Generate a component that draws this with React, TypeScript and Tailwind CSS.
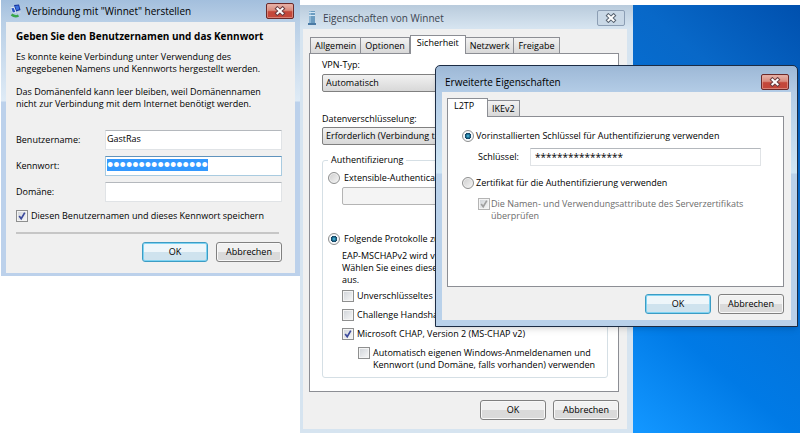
import clsx from "clsx";

const openSans = "font-['Open_Sans','Noto_Sans',sans-serif]";

function CloseButton({ inactive = false }: { inactive?: boolean }) {
  return (
    <button
      aria-label="Schließen"
      className={clsx(
        "flex h-4 w-7 shrink-0 items-center justify-center rounded-[2px] border",
        inactive
          ? "border-[#8c9eb4] bg-[#c9d8e6]"
          : "border-[#6b2a2a] bg-linear-to-b from-[#e3aca2] from-10% via-[#d98a7c] via-45% to-[#c4473a] to-55% ring-1 ring-inset ring-[#e8a89c]/60"
      )}
    >
      <svg viewBox="0 0 12 10" className="h-[10px] w-3">
        <path d="M3.4 2.6 L8.6 7.4 M8.6 2.6 L3.4 7.4" stroke={inactive ? "#55606e" : "#6a3c40"} strokeWidth="4" strokeLinecap="square" />
        <path d="M3.4 2.6 L8.6 7.4 M8.6 2.6 L3.4 7.4" stroke="#fff" strokeWidth="2" strokeLinecap="square" />
      </svg>
    </button>
  );
}

function Button({ children, primary = false }: { children: string; primary?: boolean }) {
  return (
    <button
      className={clsx(
        "h-5 w-[66px] rounded-[3px] border text-center text-black",
        primary
          ? "border-[#3c9cc4] bg-linear-to-b from-[#eef6fa] from-50% to-[#cfe3ee] to-50% ring-1 ring-inset ring-[#7fd3f2]"
          : "border-[#808080] bg-linear-to-b from-[#f1f1f1] from-50% to-[#dadada] to-50% ring-1 ring-inset ring-[#f8f8f8]"
      )}
    >
      {children}
    </button>
  );
}

function Checkbox({ id, checked = false, disabled = false }: { id: string; checked?: boolean; disabled?: boolean }) {
  return (
    <span className="grid h-3 w-3 shrink-0">
      <input
        id={id}
        type="checkbox"
        defaultChecked={checked}
        disabled={disabled}
        className="col-start-1 row-start-1 h-3 w-3 appearance-none border border-[#8e8f8f] bg-linear-to-br from-[#cfd3d8] to-[#f8f8f8] ring-1 ring-inset ring-[#f4f4f4] disabled:border-[#b4b4b4]"
      />
      {checked && (
        <svg viewBox="0 0 12 12" className="pointer-events-none col-start-1 row-start-1 h-3 w-3">
          <path d="M3.2 6 L5.2 8.8 L8.8 2.6" fill="none" stroke={disabled ? "#a0a0a0" : "#3c4a9c"} strokeWidth="1.7" />
        </svg>
      )}
    </span>
  );
}

function Radio({ id, name, checked = false }: { id: string; name: string; checked?: boolean }) {
  return (
    <input
      id={id}
      name={name}
      type="radio"
      defaultChecked={checked}
      className={clsx(
        "h-3 w-3 shrink-0 appearance-none rounded-full border border-[#8e8f8f]",
        checked
          ? "bg-[radial-gradient(circle_at_center,#7fdcf4_0,#2a8fb5_1px,#123e5c_3px,#f4f6f8_3px)]"
          : "bg-linear-to-br from-[#cdcdcd] to-[#f6f6f6] ring-1 ring-inset ring-[#f0f0f0]"
      )}
    />
  );
}

function Tab({ children, active = false }: { children: string; active?: boolean }) {
  return (
    <button
      role="tab"
      aria-selected={active}
      className={clsx(
        "border border-b-0 border-[#8c8e94] text-left",
        active ? "-mb-px h-[19px] min-w-[41px] bg-white px-[6px] pb-1" : "h-4 border-l-0 bg-linear-to-b from-[#f2f2f2] to-[#d8d8d8] px-1 first:border-l"
      )}
    >
      {children}
    </button>
  );
}

function ConnectDialog() {
  const field = "h-5 w-full border border-[#e0e3e6] border-t-[#b4b8bd] bg-white";
  return (
    <section className="absolute top-0 left-px w-[299px] bg-[linear-gradient(#a3bfdd,#b9cfe6_22px,#dfebf6_101px,#bcd1eb_102px)] px-[5px] pb-[3px]">
      <header className="flex h-[22px] items-center pr-px pl-1">
        <svg viewBox="0 0 12 14" className="h-[14px] w-3">
          <path d="M4 1 L9 0.5 L10.5 6 L6 7.5 Z" fill="#16309c" />
          <path d="M5 2 L8.4 1.6 L9.3 5.3 L6.5 6.2 Z" fill="#3d72dc" />
          <path d="M0.5 3.5 L4 3 L6.5 8.5 L2.5 9.5 Z" fill="#e4e9f4" />
          <path d="M1.4 4.3 L3.7 4 L5.4 8 L2.8 8.6 Z" fill="#2c55c0" />
          <path d="M7 8 L10 7 L11 9 L8 10 Z" fill="#c8d2e2" />
          <path d="M1.5 10.5 Q5 13.5 8.5 11.5" fill="none" stroke="#3aa64a" strokeWidth="2.4" />
        </svg>
        <h1 className="ml-1 grow text-[10px] whitespace-nowrap">Verbindung mit "Winnet" herstellen</h1>
        <CloseButton />
      </header>
      <form className="bg-[#f0f0f0] px-[10px] pt-2 pb-[11px]">
        <h2 className="text-[10px] leading-3 font-bold whitespace-nowrap">Geben Sie den Benutzernamen und das Kennwort</h2>
        <p className="mt-[9px]">
          Es konnte keine Verbindung unter Verwendung des
          <br />
          angegebenen Namens und Kennworts hergestellt werden.
        </p>
        <p className="mt-[11px]">
          Das Domänenfeld kann leer bleiben, weil Domänennamen
          <br />
          nicht zur Verbindung mit dem Internet benötigt werden.
        </p>
        <div className="mt-5 mr-[3px] grid grid-cols-[89px_1fr] items-center gap-y-[6px]">
          <label htmlFor="user">Benutzername:</label>
          <input id="user" defaultValue="GastRas" className={clsx(field, "px-px pb-[3px]")} />
          <label htmlFor="pass">Kennwort:</label>
          <div className="flex h-5 items-start border border-[#a9cbe0] border-t-[#5f93bd] bg-white px-px pt-[2px]">
            <input
              id="pass"
              type="password"
              defaultValue="passwort12345678"
              className="field-sizing-content h-3 bg-[#3399ff] font-['Liberation_Sans',sans-serif] text-[18px] leading-3 text-white"
            />
          </div>
          <label htmlFor="domain">Domäne:</label>
          <input id="domain" className={field} />
        </div>
        <div className="mt-2 flex items-center gap-[3px]">
          <Checkbox id="save" checked />
          <label htmlFor="save">Diesen Benutzernamen und dieses Kennwort speichern</label>
        </div>
        <hr className="mt-[10px] mr-[6px] border-t-2 border-[#c6c6c6]" />
        <div className="mt-2 mr-[3px] flex justify-end gap-2">
          <Button primary>OK</Button>
          <Button>Abbrechen</Button>
        </div>
      </form>
    </section>
  );
}

function PropertiesDialog() {
  const select =
    "block h-[18px] w-full appearance-none rounded-[2px] border border-[#808080] bg-linear-to-b from-[#f1f1f1] to-[#d8d8d8] px-[3px]";
  return (
    <section className="absolute top-0 left-0 w-[333px] border-b border-[#3c6c94] bg-linear-to-b from-[#b9cbdc] to-[#d6e4f0] to-[23px] pr-[6px] pb-[5px] pl-[3px]">
      <header className="flex h-6 items-center pt-[2px] pr-[2px] pl-[5px]">
        <svg viewBox="0 0 8 14" className="h-[14px] w-2">
          <rect x="1" width="6" height="14" fill="#6c9cc0" />
          <rect x="1" width="2" height="14" fill="#8fb8d6" />
          <rect x="1" y="1" width="6" height="1" fill="#d3e6f4" />
          <rect x="1" y="4" width="6" height="1" fill="#d3e6f4" />
          <rect x="0" y="12" width="8" height="2" fill="#4a7aa4" />
        </svg>
        <h1 className="ml-[7px] grow text-[10px] text-[#3c4450]">Eigenschaften von Winnet</h1>
        <CloseButton inactive />
      </header>
      <form className="bg-[#f0f0f0] pt-[6px] pr-2 pb-[9px] pl-[6px]">
        <div role="tablist" className="flex items-end pl-px">
          <Tab>Allgemein</Tab>
          <Tab>Optionen</Tab>
          <Tab active>Sicherheit</Tab>
          <Tab>Netzwerk</Tab>
          <Tab>Freigabe</Tab>
        </div>
        <div className="border border-[#8c8e94] bg-white pt-[5px] pr-[10px] pb-[13px] pl-3">
          <label htmlFor="vpn">VPN-Typ:</label>
          <select id="vpn" className={clsx(select, "mt-[3px]")}>
            <option>Automatisch</option>
          </select>
          <label htmlFor="enc" className="mt-[21px] block">
            Datenverschlüsselung:
          </label>
          <select id="enc" className={clsx(select, "mt-[2px]")}>
            <option>Erforderlich (Verbindung trennen, falls Server ablehnt)</option>
          </select>
          <fieldset className="mt-[9px] rounded-[3px] border border-[#d5dfe5] px-[5px] pb-[6px]">
            <legend className="px-[3px]">Authentifizierung</legend>
            <div className="mt-[6px] flex items-center gap-1">
              <Radio id="eap" name="auth" />
              <label htmlFor="eap">Extensible-Authentication</label>
            </div>
            <select disabled aria-label="EAP" className="mt-[3px] ml-[14px] block h-[18px] w-[240px] appearance-none rounded-[2px] border border-[#b4b4b4] bg-[#f4f4f4]" />
            <div className="mt-[28px] flex items-center gap-1">
              <Radio id="protocols" name="auth" checked />
              <label htmlFor="protocols">Folgende Protokolle zulassen</label>
            </div>
            <p className="mt-[5px] ml-[14px]">
              EAP-MSCHAPv2 wird verwendet.
              <br />
              Wählen Sie eines dieser Protokolle
              <br />
              aus.
            </p>
            <div className="mt-1 ml-[14px] flex flex-col gap-[7px]">
              <div className="flex items-center gap-[3px]">
                <Checkbox id="pap" />
                <label htmlFor="pap">Unverschlüsseltes Kennwort (PAP)</label>
              </div>
              <div className="flex items-center gap-[3px]">
                <Checkbox id="chap" />
                <label htmlFor="chap">Challenge Handshake (CHAP)</label>
              </div>
              <div className="flex items-center gap-[3px]">
                <Checkbox id="mschap" checked />
                <label htmlFor="mschap">Microsoft CHAP, Version 2 (MS-CHAP v2)</label>
              </div>
              <div className="ml-4 flex items-start gap-[3px]">
                <Checkbox id="auto" />
                <label htmlFor="auto" className="whitespace-nowrap">
                  Automatisch eigenen Windows-Anmeldenamen und
                  <br />
                  Kennwort (und Domäne, falls vorhanden) verwenden
                </label>
              </div>
            </div>
          </fieldset>
        </div>
        <div className="mt-2 flex justify-end gap-[7px]">
          <Button>OK</Button>
          <Button>Abbrechen</Button>
        </div>
      </form>
    </section>
  );
}

function AdvancedDialog() {
  return (
    <section className="absolute top-[60px] left-[135px] w-[363px] rounded-t-[5px] border border-[#1c2c44] bg-[linear-gradient(#9db8d6,#b3cce6_26px,#cfe6f5_107px,#b9d1ea_108px)] px-[6px] pb-[6px] shadow-md">
      <header className="flex h-[26px] items-center pt-[6px] pr-[2px] pl-[3px]">
        <h1 className="grow text-[10px]">Erweiterte Eigenschaften</h1>
        <CloseButton />
      </header>
      <form className="bg-[#f0f0f0] pt-[6px] pr-[7px] pb-[6px] pl-[5px]">
        <div role="tablist" className="flex items-end">
          <Tab active>L2TP</Tab>
          <Tab>IKEv2</Tab>
        </div>
        <div className="h-[171px] border border-[#8c8e94] bg-white px-[14px] pt-[13px]">
          <div className="flex items-center gap-[2px]">
            <Radio id="psk" name="l2tp" checked />
            <label htmlFor="psk">Vorinstallierten Schlüssel für Authentifizierung verwenden</label>
          </div>
          <div className="mt-[6px] ml-4 flex items-center">
            <label htmlFor="key" className="w-[52px]">
              Schlüssel:
            </label>
            <input id="key" defaultValue="****************" className="h-[18px] w-[231px] border border-[#e0e3e6] border-t-[#b4b8bd] bg-white px-1 text-[10px]" />
          </div>
          <div className="mt-[11px] flex items-center gap-[2px]">
            <Radio id="cert" name="l2tp" />
            <label htmlFor="cert">Zertifikat für die Authentifizierung verwenden</label>
          </div>
          <div className="mt-[9px] ml-4 flex items-start gap-px text-[#6d6d6d]">
            <Checkbox id="attrs" checked disabled />
            <label htmlFor="attrs">
              Die Namen- und Verwendungsattribute des Serverzertifikats
              <br />
              überprüfen
            </label>
          </div>
        </div>
        <div className="mt-[7px] flex justify-end gap-[7px]">
          <Button primary>OK</Button>
          <Button>Abbrechen</Button>
        </div>
      </form>
    </section>
  );
}

export default function App() {
  return (
    <main className={clsx(openSans, "flex min-h-screen bg-white text-[9px] leading-3 text-black")}>
      <div className="relative w-[300px] shrink-0">
        <ConnectDialog />
      </div>
      <div className="relative mt-[5px] mb-[2px] grow overflow-hidden bg-[linear-gradient(40deg,#1296ff_34%,#007ae6_49%,#0868c8_84%,#0050ae)]">
        <PropertiesDialog />
        <AdvancedDialog />
      </div>
    </main>
  );
}
